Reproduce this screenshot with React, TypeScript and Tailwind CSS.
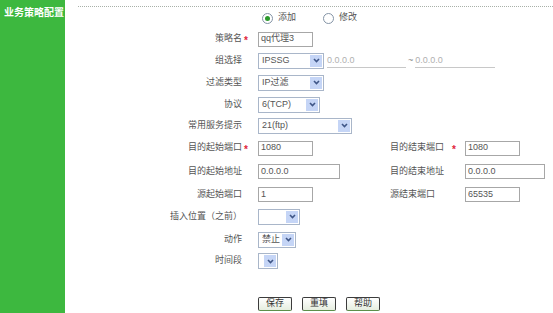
import React from "react";

const font = { fontFamily: '"Liberation Sans", "Noto Sans CJK SC", sans-serif' };

function Star() {
  return <span className="text-[10px] font-bold leading-none text-[#e0243a]">*</span>;
}

function TextBox({ value, width }: { value: string; width: string }) {
  return (
    <div
      className={`${width} flex h-[15px] items-center border border-[#a7a7a7] bg-white pl-[2px] text-[9px] text-[#555]`}
    >
      {value}
    </div>
  );
}

function Select({ value, width }: { value?: string; width: string }) {
  return (
    <div className={`${width} flex h-[16px] items-center border border-[#a9b6c9] bg-white`}>
      <span className="flex-1 truncate pl-[3px] text-[9px] text-[#555]">{value}</span>
      <span className="m-[1px] flex h-[12px] w-[12px] items-center justify-center bg-[#c5d5f6]">
        <svg width="7" height="5" viewBox="0 0 7 5">
          <path d="M1 1 L3.5 3.5 L6 1" fill="none" stroke="#3f5687" strokeWidth="1.6" />
        </svg>
      </span>
    </div>
  );
}

function Radio({ checked, label }: { checked?: boolean; label: string }) {
  return (
    <div className="flex items-center gap-[5px]">
      <span className="flex h-[11px] w-[11px] items-center justify-center rounded-full border border-[#8494a6] bg-white">
        {checked ? <span className="h-[5px] w-[5px] rounded-full bg-[#2c9a2c]" /> : null}
      </span>
      <span className="text-[9px] text-[#555]">{label}</span>
    </div>
  );
}

function Row({
  h,
  label,
  star,
  children,
}: {
  h: string;
  label?: string;
  star?: boolean;
  children?: React.ReactNode;
}) {
  return (
    <div className={`flex ${h} items-center pl-[13px]`}>
      <div className="w-[164px] text-right text-[9px] text-[#555]">{label}</div>
      <div className="w-[16px] pl-[2px]">{star ? <Star /> : null}</div>
      {children}
    </div>
  );
}

function RightField({ label, star, children }: { label: string; star?: boolean; children: React.ReactNode }) {
  return (
    <div className="flex items-center">
      <div className="w-[62px] text-[9px] text-[#555]">{label}</div>
      <div className="w-[13px]">{star ? <Star /> : null}</div>
      {children}
    </div>
  );
}

function Btn({ label }: { label: string }) {
  return (
    <button className="flex h-[14px] w-[34px] items-center justify-center rounded-[2px] border border-[#3c3c3c] border-b-[#5d8f4a] bg-gradient-to-b from-white to-[#e6eee0] text-[9px] text-[#333]">
      {label}
    </button>
  );
}

export default function App() {
  return (
    <div className="flex h-[313px] w-[553px] overflow-hidden bg-white" style={font}>
      <aside className="w-[65px] shrink-0 bg-[#3db83f] pl-[4px] pt-[6px]">
        <div className="text-[10px] font-bold leading-[14px] text-white">业务策略配置</div>
      </aside>
      <main className="flex-1 pt-[6px]">
        <div className="ml-[13px] border-t border-dotted border-[#a8b0a8]" />
        <div className="mt-[1px] flex h-[20px] items-center gap-[27px] pl-[197px]">
          <Radio checked label="添加" />
          <Radio label="修改" />
        </div>
        <Row h="h-[22px]" label="策略名" star>
          <TextBox value="qq代理3" width="w-[55px]" />
        </Row>
        <Row h="h-[21px]" label="组选择">
          <Select value="IPSSG" width="w-[66px]" />
          <div className="ml-[3px] w-[79px] border-b border-[#c8c8c8] text-[9px] leading-[13px] text-[#b0b0b0]">0.0.0.0</div>
          <span className="mx-[2px] text-[9px] text-[#888]">~</span>
          <div className="w-[80px] border-b border-[#c8c8c8] text-[9px] leading-[13px] text-[#b0b0b0]">0.0.0.0</div>
        </Row>
        <Row h="h-[23px]" label="过滤类型">
          <Select value="IP过滤" width="w-[66px]" />
        </Row>
        <Row h="h-[21px]" label="协议">
          <Select value="6(TCP)" width="w-[62px]" />
        </Row>
        <Row h="h-[21px]" label="常用服务提示">
          <Select value="21(ftp)" width="w-[94px]" />
        </Row>
        <Row h="h-[24px]" label="目的起始端口" star>
          <div className="w-[132px]">
            <TextBox value="1080" width="w-[55px]" />
          </div>
          <RightField label="目的结束端口" star>
            <TextBox value="1080" width="w-[55px]" />
          </RightField>
        </Row>
        <Row h="h-[23px]" label="目的起始地址">
          <div className="w-[132px]">
            <TextBox value="0.0.0.0" width="w-[82px]" />
          </div>
          <RightField label="目的结束地址">
            <TextBox value="0.0.0.0" width="w-[80px]" />
          </RightField>
        </Row>
        <Row h="h-[23px]" label="源起始端口">
          <div className="w-[132px]">
            <TextBox value="1" width="w-[55px]" />
          </div>
          <RightField label="源结束端口">
            <TextBox value="65535" width="w-[55px]" />
          </RightField>
        </Row>
        <Row h="h-[21px]" label="插入位置（之前）">
          <Select width="w-[42px]" />
        </Row>
        <Row h="h-[25px]" label="动作">
          <Select value="禁止" width="w-[38px]" />
        </Row>
        <Row h="h-[18px]" label="时间段">
          <Select width="w-[20px]" />
        </Row>
        <div className="mt-[27px] flex gap-[10px] pl-[193px]">
          <Btn label="保存" />
          <Btn label="重填" />
          <Btn label="帮助" />
        </div>
      </main>
    </div>
  );
}
